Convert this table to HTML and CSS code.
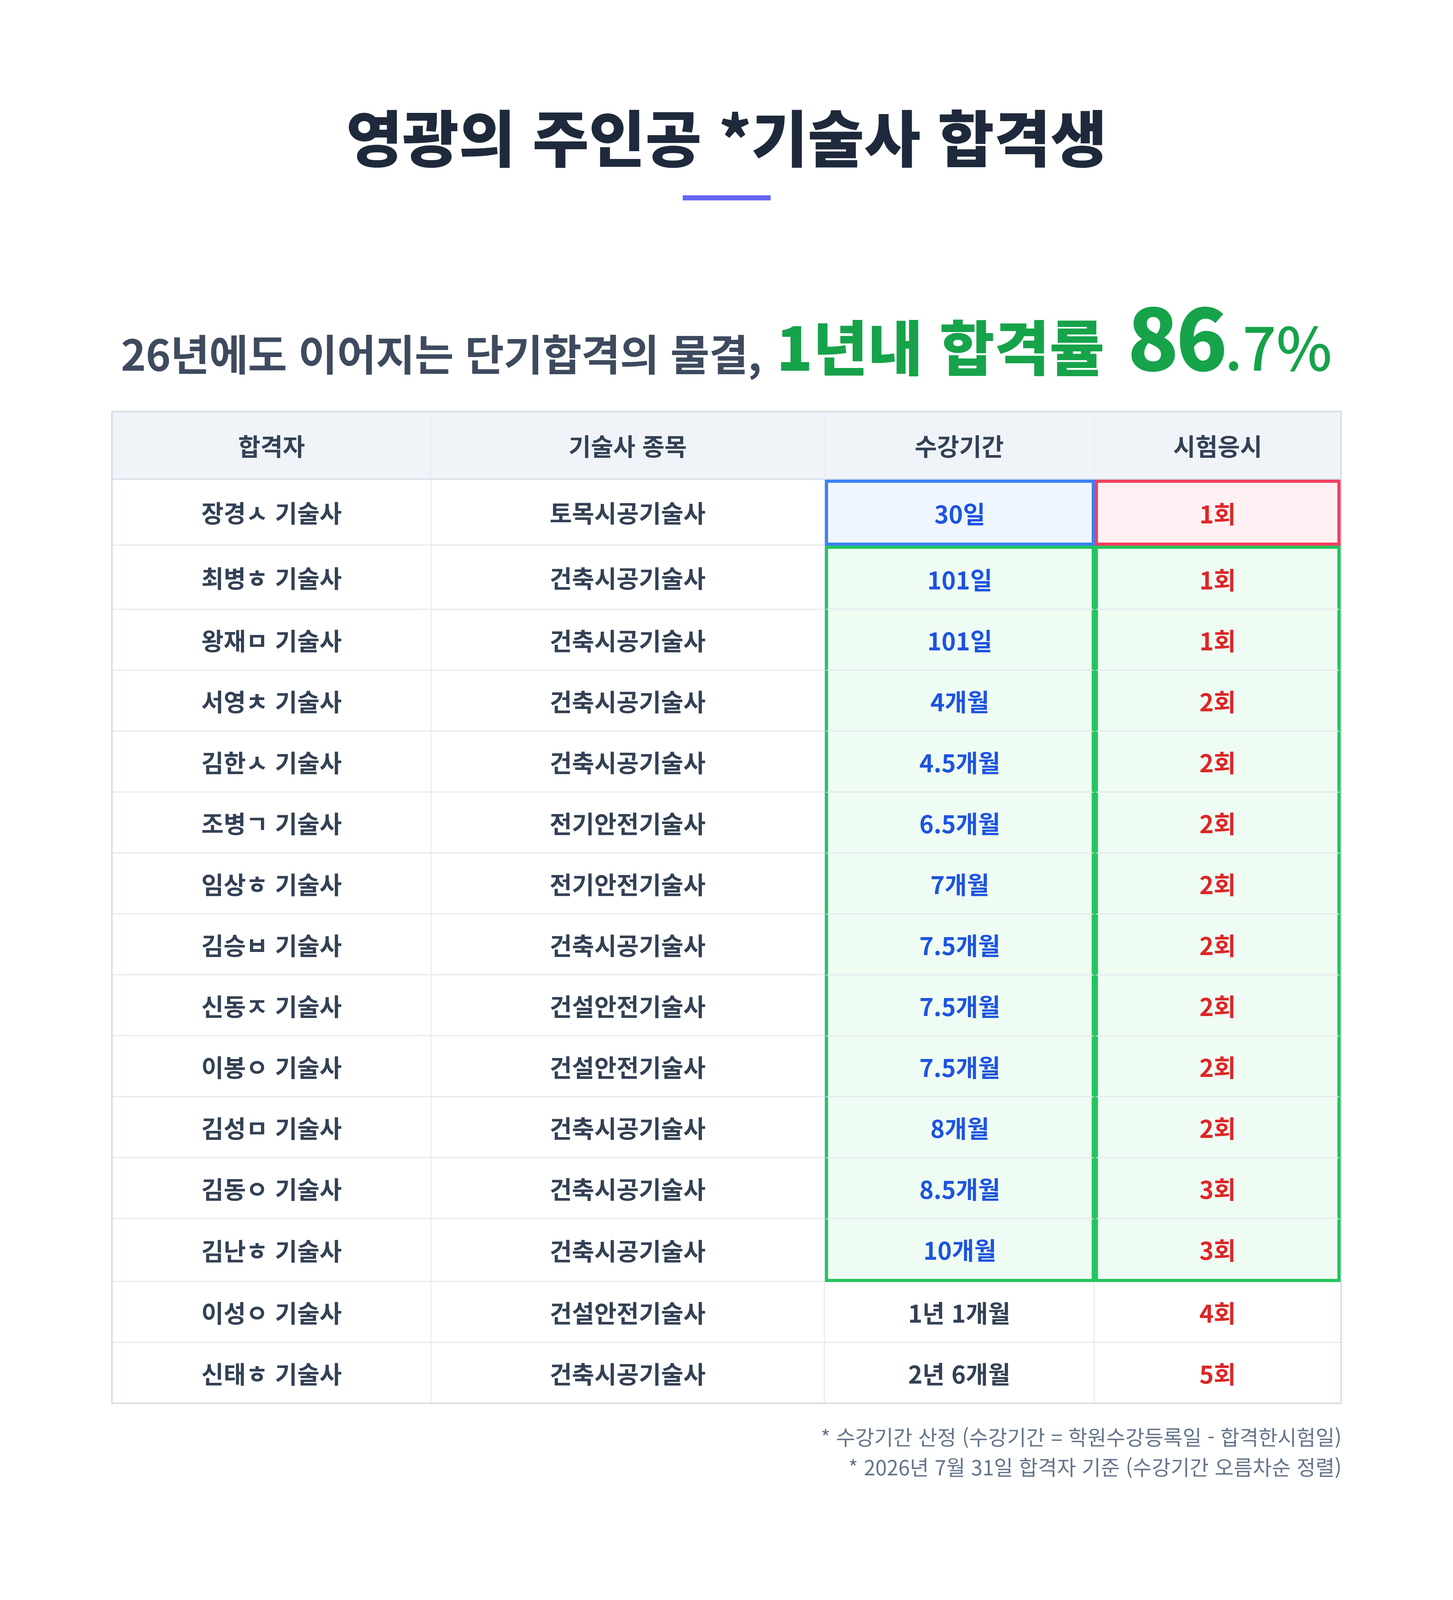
FILE: index.html
```html
<!DOCTYPE html>
<html lang="ko">
<head>
<meta charset="utf-8">
<title>영광의 주인공 기술사 합격생</title>
<link rel="stylesheet" href="styles.css">
</head>
<body>
<div class="page">
  <header class="hero">
    <h1 class="title">영광의 주인공 *기술사 합격생</h1>
    <div class="title-bar"></div>
    <p class="headline"><span class="lead">26년에도 이어지는 단기합격의 물결,</span> <span class="accent">1년내 합격률 <span class="big">86</span><span class="dec">.7%</span></span></p>
  </header>

  <table class="results">
    <colgroup>
      <col class="c-name">
      <col class="c-field">
      <col class="c-period">
      <col class="c-tries">
    </colgroup>
    <thead>
      <tr><th>합격자</th><th>기술사 종목</th><th>수강기간</th><th>시험응시</th></tr>
    </thead>
    <tbody>
      <tr><td>장경ㅅ 기술사</td><td>토목시공기술사</td><td class="hl-blue t-blue">30일</td><td class="hl-red t-red">1회</td></tr>
      <tr><td>최병ㅎ 기술사</td><td>건축시공기술사</td><td class="hl-green first t-blue">101일</td><td class="hl-green first t-red">1회</td></tr>
      <tr><td>왕재ㅁ 기술사</td><td>건축시공기술사</td><td class="hl-green t-blue">101일</td><td class="hl-green t-red">1회</td></tr>
      <tr><td>서영ㅊ 기술사</td><td>건축시공기술사</td><td class="hl-green t-blue">4개월</td><td class="hl-green t-red">2회</td></tr>
      <tr><td>김한ㅅ 기술사</td><td>건축시공기술사</td><td class="hl-green t-blue">4.5개월</td><td class="hl-green t-red">2회</td></tr>
      <tr><td>조병ㄱ 기술사</td><td>전기안전기술사</td><td class="hl-green t-blue">6.5개월</td><td class="hl-green t-red">2회</td></tr>
      <tr><td>임상ㅎ 기술사</td><td>전기안전기술사</td><td class="hl-green t-blue">7개월</td><td class="hl-green t-red">2회</td></tr>
      <tr><td>김승ㅂ 기술사</td><td>건축시공기술사</td><td class="hl-green t-blue">7.5개월</td><td class="hl-green t-red">2회</td></tr>
      <tr><td>신동ㅈ 기술사</td><td>건설안전기술사</td><td class="hl-green t-blue">7.5개월</td><td class="hl-green t-red">2회</td></tr>
      <tr><td>이봉ㅇ 기술사</td><td>건설안전기술사</td><td class="hl-green t-blue">7.5개월</td><td class="hl-green t-red">2회</td></tr>
      <tr><td>김성ㅁ 기술사</td><td>건축시공기술사</td><td class="hl-green t-blue">8개월</td><td class="hl-green t-red">2회</td></tr>
      <tr><td>김동ㅇ 기술사</td><td>건축시공기술사</td><td class="hl-green t-blue">8.5개월</td><td class="hl-green t-red">3회</td></tr>
      <tr><td>김난ㅎ 기술사</td><td>건축시공기술사</td><td class="hl-green last t-blue">10개월</td><td class="hl-green last t-red">3회</td></tr>
      <tr><td>이성ㅇ 기술사</td><td>건설안전기술사</td><td>1년 1개월</td><td class="t-red">4회</td></tr>
      <tr><td>신태ㅎ 기술사</td><td>건축시공기술사</td><td>2년 6개월</td><td class="t-red">5회</td></tr>
    </tbody>
  </table>

  <div class="notes">
    <p>* 수강기간 산정 (수강기간 = 학원수강등록일 - 합격한시험일)</p>
    <p>* 2026년 7월 31일 합격자 기준 (수강기간 오름차순 정렬)</p>
  </div>
</div>
</body>
</html>
```

FILE: styles.css
```css
html, body {
  margin: 0;
  padding: 0;
  background: #ffffff;
}

body {
  font-family: "Noto Sans CJK KR", "Noto Sans", sans-serif;
  color: #334155;
}

.page {
  width: 3150px;
  margin: 0 auto;
  padding-top: 256px;
}

.hero {
  text-align: center;
}

.title {
  margin: 0;
  font-size: 157px;
  line-height: 180px;
  font-weight: 900;
  color: #1e293b;
  letter-spacing: 0;
}

.title-bar {
  width: 225px;
  height: 13px;
  margin: 64px auto 0;
  background: #6366f1;
}

.headline {
  margin: 234px 0 0;
  font-size: 109px;
  line-height: 1;
  white-space: nowrap;
}

.lead {
  font-weight: 700;
  color: #3e4a5e;
  letter-spacing: -1px;
}

.accent {
  font-size: 153px;
  font-weight: 900;
  color: #16a34a;
  margin-left: 8px;
}

.big {
  font-size: 216px;
  margin-left: 16px;
  letter-spacing: -7px;
}

.dec {
  font-size: 152px;
  font-weight: 500;
}

.results {
  width: 100%;
  margin-top: 89px;
  table-layout: fixed;
  border-collapse: separate;
  border-spacing: 0;
  border: 3px solid #cdd6e2;
  font-size: 62px;
  font-weight: 700;
  color: #334155;
}

.c-name { width: 26%; }
.c-field { width: 32%; }
.c-period { width: 22%; }
.c-tries { width: 20%; }

.results th,
.results td {
  padding: 0;
  text-align: center;
  vertical-align: middle;
  line-height: 80px;
  border-right: 3px solid #e9eef4;
  border-bottom: 3px solid #e4e9f0;
}

.results th:last-child,
.results td:last-child {
  border-right: none;
}

.results th {
  height: 170px;
  background: #f0f4f9;
  font-weight: 700;
  border-bottom-color: #d3dbe6;
}

.results td {
  height: 153px;
  background: #ffffff;
}

.results tbody tr:last-child td {
  border-bottom: none;
}

.results td.hl-blue {
  background: #eff6ff;
  border: 8px solid #3b82f6;
}

.results td.hl-red {
  background: #fff1f3;
  border: 8px solid #f43f5e;
}

.results td.hl-green {
  background: #effcf3;
  border-left: 8px solid #22c55e;
  border-right: 8px solid #22c55e;
}

.results td.hl-green.first {
  border-top: 8px solid #22c55e;
}

.results td.hl-green.last {
  border-bottom: 8px solid #22c55e;
}

.t-blue { color: #1d54e0; }
.t-red { color: #dc2626; }

.notes {
  margin-top: 45px;
  text-align: right;
  font-size: 53px;
  line-height: 77px;
  font-weight: 400;
  color: #64748b;
}

.notes p {
  margin: 0;
}
```
